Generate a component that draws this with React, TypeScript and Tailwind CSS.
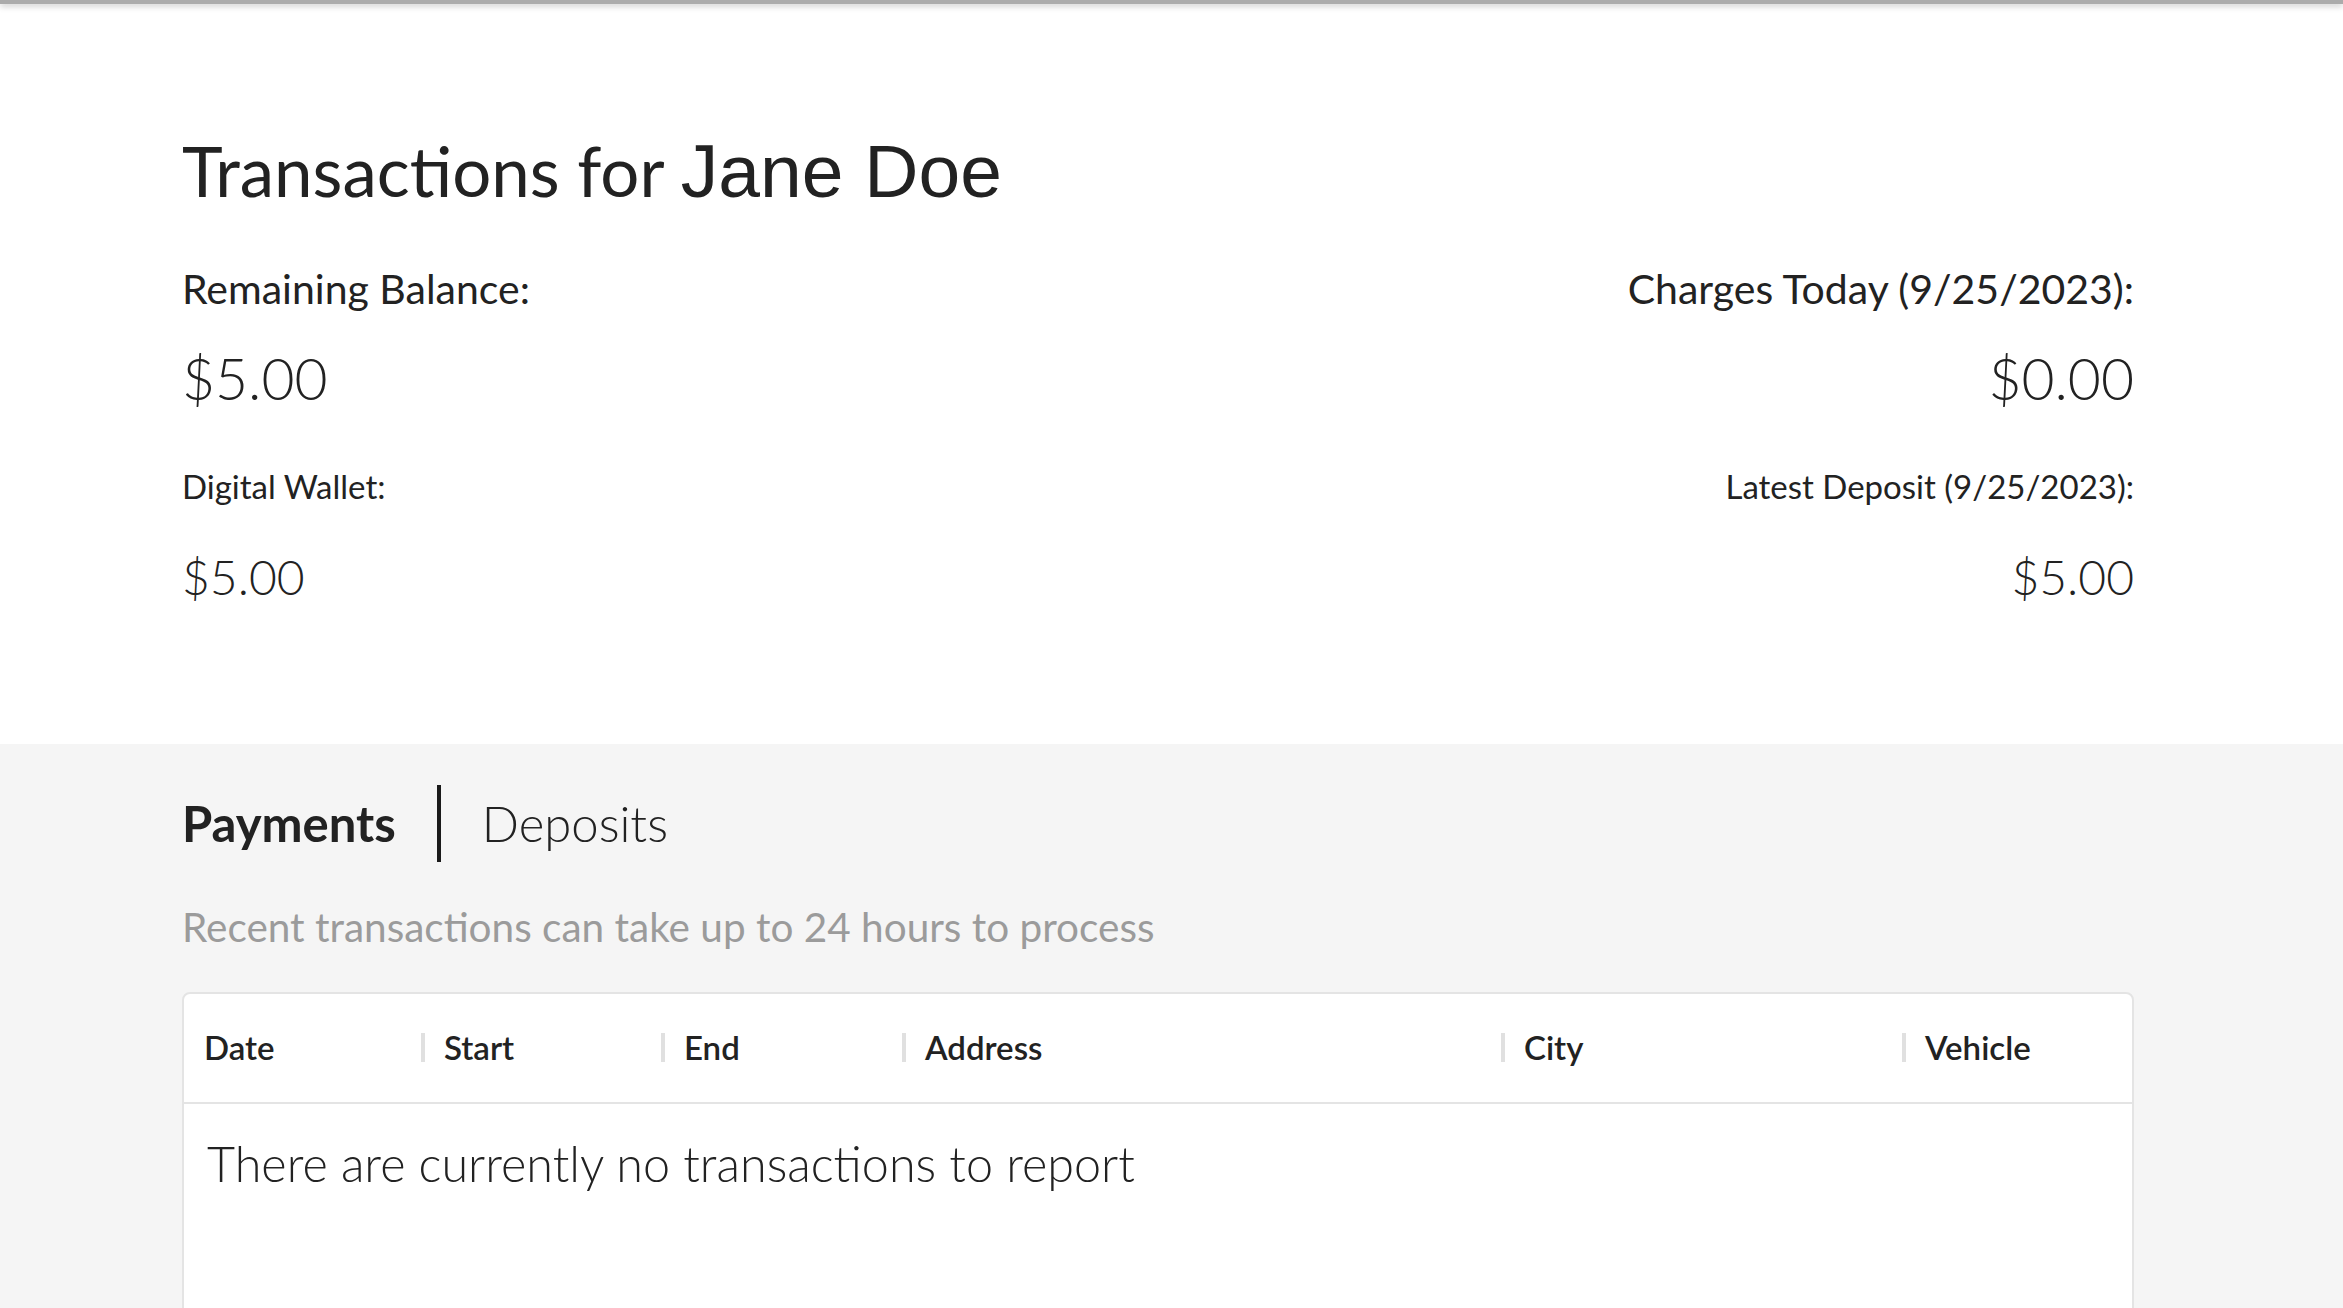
import React from 'react';

const columns = ['Date', 'Start', 'End', 'Address', 'City', 'Vehicle'];

function Stat({ label, value, small, align }: { label: string; value: string; small?: boolean; align: 'left' | 'right' }) {
  return (
    <div className={align === 'right' ? 'text-right' : 'text-left'}>
      <p className={small ? 'text-[33px] leading-none' : 'text-[41px] leading-none'}>{label}</p>
      <p className={small ? 'mt-[50px] text-[48px] font-light leading-none' : 'mt-[41px] text-[57px] font-light leading-none'}>
        {value}
      </p>
    </div>
  );
}

export default function App() {
  return (
    <div className="min-h-screen bg-[#f5f5f5] font-['Lato',sans-serif] text-[#222]">
      {/* header shadow from the bar above */}
      <div className="relative z-10 h-[4px] bg-[#ababab] shadow-[0_2px_6px_rgba(0,0,0,0.25)]" />

      {/* Summary */}
      <section className="bg-white pb-[143px] pl-[182px] pr-[209px] pt-[130px]">
        <h1 className="text-[69px] font-normal leading-none">
          Transactions for <span className="font-['Liberation_Sans',Arial,sans-serif] text-[75px]">Jane Doe</span>
        </h1>

        <div className="mt-[59px] flex justify-between">
          <div className="flex flex-col gap-[63px]">
            <Stat label="Remaining Balance:" value="$5.00" align="left" />
            <Stat label="Digital Wallet:" value="$5.00" small align="left" />
          </div>
          <div className="flex flex-col gap-[63px]">
            <Stat label="Charges Today (9/25/2023):" value="$0.00" align="right" />
            <Stat label="Latest Deposit (9/25/2023):" value="$5.00" small align="right" />
          </div>
        </div>
      </section>

      {/* Transactions */}
      <section className="pl-[182px] pr-[209px] pt-[41px]">
        <div className="flex items-center gap-[41px]">
          <span className="text-[49px] font-bold leading-none">Payments</span>
          <span className="h-[77px] w-[4px] bg-[#1a1a1a]" />
          <span className="text-[49px] font-light leading-none">Deposits</span>
        </div>

        <p className="mt-[45px] text-[40.5px] leading-none text-[#9b9b9b]">
          Recent transactions can take up to 24 hours to process
        </p>

        <div className="mt-[44px] h-[400px] rounded-[8px] border-2 border-[#e4e4e4] bg-white">
          <div className="grid h-[110px] grid-cols-[237px_240px_241px_599px_401px_1fr] items-center border-b-2 border-[#e4e4e4]">
            {columns.map((col, i) =>
              i === 0 ? (
                <div key={col} className="pl-[20px] text-[33px] font-semibold leading-none">
                  {col}
                </div>
              ) : (
                <div key={col} className="flex items-center">
                  <span className="h-[29px] w-[4px] bg-[#e0e0e0]" />
                  <span className="ml-[19px] text-[33px] font-semibold leading-none">{col}</span>
                </div>
              )
            )}
          </div>
          <p className="pl-[23px] pt-[35px] text-[48.5px] font-light leading-none">
            There are currently no transactions to report
          </p>
        </div>
      </section>
    </div>
  );
}
